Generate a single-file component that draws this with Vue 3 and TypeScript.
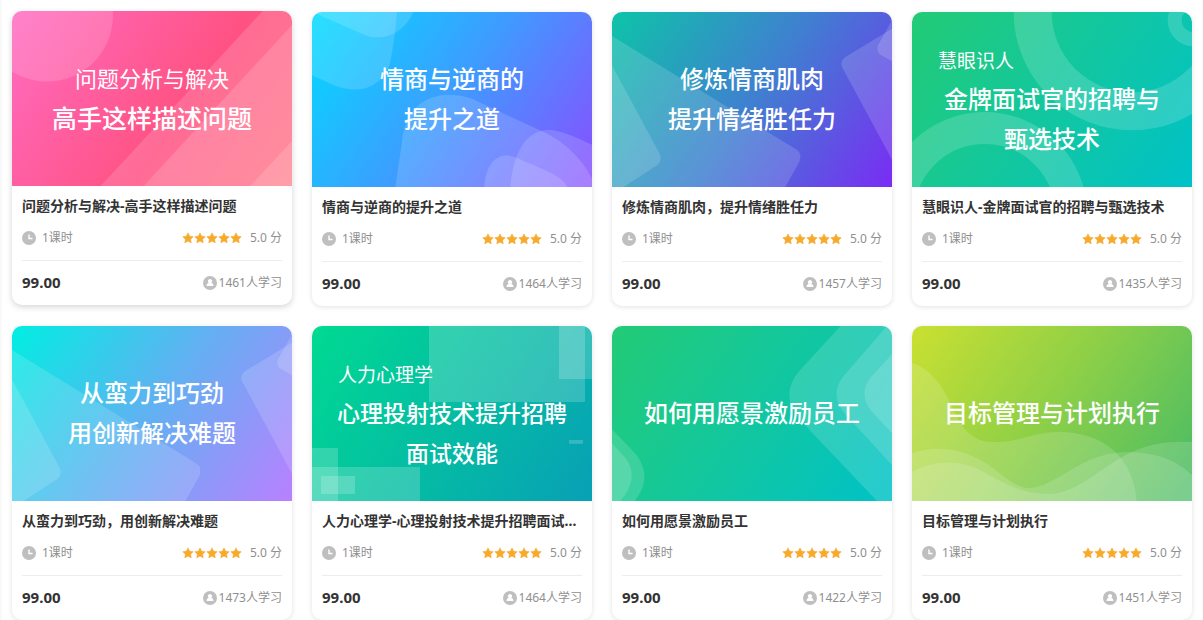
<script setup lang="ts">
interface CoverLine {
  text: string
  kind: 'main' | 'sub' | 'lead'
}

interface Cover {
  stops: string[]
  middle?: number
  opacity?: number
  shapes: string[]
  rings?: { x: number; y: number; r: number; width: number }[]
  size: 's' | 'm' | 'l'
  lines: CoverLine[]
}

interface Course {
  id: number
  title: string
  lessons: number
  score: string
  price: string
  learners: number
  active?: boolean
  cover: Cover
}

const tileShapes = [
  'M0 72L552 412Q572 424 562 450L520 525H0Z',
  'M0 160L143 425Q152 445 135 460L35 525H0Z',
  'M840 50L700 135Q683 146 690 165L840 443Z',
  'M840 25L798 100Q792 115 803 127L840 148Z',
]

const main = (text: string): CoverLine => ({ text, kind: 'main' })

const courses: Course[] = [
  {
    id: 1,
    title: '问题分析与解决-高手这样描述问题',
    lessons: 1,
    score: '5.0',
    price: '99.00',
    learners: 1461,
    active: true,
    cover: {
      stops: ['#ff6cc2', '#ff5283', '#ff6275'],
      middle: 0.6,
      shapes: [
        'M105 -184.500A198 198 0 1 1 104.900 -184.500Z',
        'M752 0L266 525H840V0Z',
        'M840 42L395 525H840Z',
        'M840 390L715 525H840Z',
      ],
      size: 'l',
      lines: [{ text: '问题分析与解决', kind: 'lead' }, main('高手这样描述问题')],
    },
  },
  {
    id: 2,
    title: '情商与逆商的提升之道',
    lessons: 1,
    score: '5.0',
    price: '99.00',
    learners: 1464,
    cover: {
      stops: ['#00dcff', '#3f9bff', '#8a4dff'],
      shapes: [
        'M0 0L150 65C190 85 265 85 304 0Z',
        'M0 190L70 222C150 250 215 220 235 150Q250 70 255 0H0Z',
        'M250 525L270 390C280 270 370 225 480 260L690 358C760 390 810 440 840 500V525Z',
        'M595 525C605 420 640 350 720 354C760 360 800 380 840 398V525Z',
        'M517 525C522 440 570 415 620 440L700 475C735 490 755 505 766 525Z',
      ],
      size: 'm',
      lines: [main('情商与逆商的'), main('提升之道')],
    },
  },
  {
    id: 3,
    title: '修炼情商肌肉，提升情绪胜任力',
    lessons: 1,
    score: '5.0',
    price: '99.00',
    learners: 1457,
    cover: {
      stops: ['#0dc4a8', '#3f80d0', '#7a2cf4'],
      shapes: tileShapes,
      size: 'm',
      lines: [main('修炼情商肌肉'), main('提升情绪胜任力')],
    },
  },
  {
    id: 4,
    title: '慧眼识人-金牌面试官的招聘与甄选技术',
    lessons: 1,
    score: '5.0',
    price: '99.00',
    learners: 1435,
    cover: {
      stops: ['#23cb75', '#12c79f', '#00c2c8'],
      shapes: [],
      rings: [
        { x: 660, y: 0, r: 298, width: 114 },
        { x: 845, y: 25, r: 57, width: 42 },
        { x: 218, y: 608, r: 260, width: 96 },
      ],
      size: 'm',
      lines: [
        { text: '慧眼识人', kind: 'sub' },
        main('金牌面试官的招聘与'),
        main('甄选技术'),
      ],
    },
  },
  {
    id: 5,
    title: '从蛮力到巧劲，用创新解决难题',
    lessons: 1,
    score: '5.0',
    price: '99.00',
    learners: 1473,
    cover: {
      stops: ['#00eee2', '#62b0f2', '#b980ff'],
      shapes: tileShapes,
      size: 'm',
      lines: [main('从蛮力到巧劲'), main('用创新解决难题')],
    },
  },
  {
    id: 6,
    title: '人力心理学-心理投射技术提升招聘面试效能',
    lessons: 1,
    score: '5.0',
    price: '99.00',
    learners: 1464,
    cover: {
      stops: ['#00da92', '#04bda3', '#08a0b6'],
      opacity: 0.19,
      shapes: [
        'M351 0H819V228H351Z',
        'M741 0H840V159H741Z',
        'M771 342H813V353H771Z',
        'M0 366H78V525H0Z',
        'M0 423H324V525H0Z',
        'M27 450H129V504H27Z',
      ],
      size: 's',
      lines: [
        { text: '人力心理学', kind: 'sub' },
        main('心理投射技术提升招聘'),
        main('面试效能'),
      ],
    },
  },
  {
    id: 7,
    title: '如何用愿景激励员工',
    lessons: 1,
    score: '5.0',
    price: '99.00',
    learners: 1422,
    cover: {
      stops: ['#23cb75', '#12c79f', '#00c2c8'],
      shapes: [
        'M686 0L562 135Q502 205 562 280L795 525H840V0Z',
        'M825 0L695 150Q650 205 700 265L840 418V0Z',
        'M840 85L775 155Q738 205 778 255L840 322Z',
        'M0 310L72 385Q125 455 68 525H0Z',
        'M0 352L40 395Q85 455 25 525H0Z',
      ],
      size: 'm',
      lines: [main('如何用愿景激励员工')],
    },
  },
  {
    id: 8,
    title: '目标管理与计划执行',
    lessons: 1,
    score: '5.0',
    price: '99.00',
    learners: 1451,
    cover: {
      stops: ['#cae031', '#8ccf48', '#46bb66'],
      shapes: [
        'M0 110C60 130 90 180 120 240C150 310 180 348 245 348C320 350 360 318 440 318C580 318 665 400 674 525H0Z',
        'M0 382C80 355 150 370 210 405C270 440 290 475 345 487C440 485 500 378 650 378C730 380 790 400 840 447V525H0Z',
        'M0 437C80 395 160 405 220 440C290 480 340 505 410 504C540 500 600 350 800 347L840 348V525H0Z',
      ],
      size: 'm',
      lines: [main('目标管理与计划执行')],
    },
  },
]
</script>

<template>
  <main class="page">
    <ul class="grid">
      <li v-for="course in courses" :key="course.id">
        <a class="card" :class="{ active: course.active }" :href="`#course-${course.id}`">
          <div class="cover">
            <svg class="art" viewBox="0 0 840 525" preserveAspectRatio="none" aria-hidden="true">
              <defs>
                <linearGradient
                  :id="`bg-${course.id}`"
                  gradientUnits="userSpaceOnUse"
                  x1="12"
                  y1="-17"
                  x2="828"
                  y2="542"
                >
                  <stop offset="0" :stop-color="course.cover.stops[0]" />
                  <stop
                    :offset="course.cover.middle ?? 0.5"
                    :stop-color="course.cover.stops[1]"
                  />
                  <stop offset="1" :stop-color="course.cover.stops[2]" />
                </linearGradient>
              </defs>
              <rect width="840" height="525" :fill="`url(#bg-${course.id})`" />
              <path
                v-for="(shape, i) in course.cover.shapes"
                :key="i"
                :d="shape"
                fill="#fff"
                :fill-opacity="course.cover.opacity ?? 0.15"
              />
              <circle
                v-for="(ring, i) in course.cover.rings ?? []"
                :key="`ring-${i}`"
                :cx="ring.x"
                :cy="ring.y"
                :r="ring.r"
                :stroke-width="ring.width"
                fill="none"
                stroke="#fff"
                stroke-opacity="0.16"
              />
            </svg>
            <div class="caption" :class="`size-${course.cover.size}`">
              <span v-for="line in course.cover.lines" :key="line.text" :class="line.kind">{{
                line.text
              }}</span>
            </div>
          </div>
          <div class="body">
            <h3 class="title">{{ course.title }}</h3>
            <div class="meta">
              <span class="lessons">
                <svg class="icon" viewBox="0 0 14 14" aria-hidden="true">
                  <circle cx="7" cy="7" r="7" fill="#bfbfbf" />
                  <path d="M7 3.500V7.500H10.500" fill="none" stroke="#fff" stroke-width="1.400" />
                </svg>
                {{ course.lessons }}课时
              </span>
              <span class="rating">
                <span class="stars" role="img" aria-label="5 / 5">
                  <svg v-for="n in 5" :key="n" class="star" viewBox="0 0 12 12">
                    <path
                      d="M6 .9L7.600 4.200L11.200 4.700L8.600 7.200L9.200 10.800L6 9.100L2.800 10.800L3.400 7.200L.8 4.700L4.400 4.200Z"
                      fill="#f7a92c"
                      stroke="#f7a92c"
                      stroke-width=".6"
                      stroke-linejoin="round"
                    />
                  </svg>
                </span>
                <span>{{ course.score }} 分</span>
              </span>
            </div>
            <div class="foot">
              <strong class="price">{{ course.price }}</strong>
              <span class="learners">
                <svg class="icon" viewBox="0 0 14 14" aria-hidden="true">
                  <circle cx="7" cy="7" r="7" fill="#bfbfbf" />
                  <path
                    d="M7 2.900A2.200 2.300 0 0 1 8.200 7.100C9.700 7.400 10.500 8.500 10.500 10H3.500C3.500 8.500 4.300 7.400 5.800 7.100A2.200 2.300 0 0 1 7 2.900Z"
                    fill="#fff"
                  />
                </svg>
                {{ course.learners }}人学习
              </span>
            </div>
          </div>
        </a>
      </li>
    </ul>
  </main>
</template>

<style>
body {
  margin: 0;
  background: #f9f9f9;
}
</style>

<style scoped>
.page {
  margin: 0 1px 0 2px;
  padding: 12px 10px 0;
  background: #fff;
  font-family: 'Noto Sans', 'Noto Sans CJK SC', sans-serif;
  color: #333;
}

.grid {
  display: grid;
  grid-template-columns: repeat(4, minmax(0, 1fr));
  gap: 20px;
  margin: 0;
  padding: 0;
  list-style: none;
}

.card {
  display: block;
  overflow: hidden;
  border-radius: 10px;
  background: #fff;
  box-shadow: 0 1px 5px rgba(0, 0, 0, 0.12);
  color: inherit;
  text-decoration: none;
}

.card.active,
.card:hover {
  transform: translateY(-1px);
  box-shadow: 0 2px 6px rgba(0, 0, 0, 0.17);
}

.cover {
  display: grid;
  aspect-ratio: 8 / 5;
  overflow: hidden;
}

.art,
.caption {
  grid-area: 1 / 1;
  width: 100%;
  height: 100%;
}

.caption {
  z-index: 1;
  display: flex;
  flex-direction: column;
  align-items: center;
  justify-content: center;
  box-sizing: border-box;
  padding-bottom: 4px;
  color: #fff;
  font-family: 'Noto Sans CJK SC', sans-serif;
  font-weight: 500;
  line-height: 40px;
  white-space: nowrap;
}

.size-s {
  font-size: 23px;
}

.size-m {
  font-size: 24px;
}

.size-l {
  font-size: 25px;
}

.lead {
  font-size: 22px;
  font-weight: 400;
}

.sub {
  align-self: flex-start;
  margin: 4px 0 0 26px;
  font-size: 19px;
  font-weight: 400;
  line-height: 36px;
}

.body {
  padding: 0 10px;
}

.title {
  margin: 0;
  overflow: hidden;
  font-size: 14px;
  font-weight: 700;
  line-height: 40px;
  text-overflow: ellipsis;
  white-space: nowrap;
}

.meta {
  display: flex;
  align-items: center;
  justify-content: space-between;
  padding-bottom: 10px;
  border-bottom: 1px solid #ededed;
  color: #8f8f8f;
  font-size: 12px;
  line-height: 24px;
}

.lessons {
  display: flex;
  align-items: center;
  gap: 6px;
}

.rating {
  display: flex;
  align-items: center;
  gap: 8px;
}

.stars {
  display: flex;
}

.star {
  width: 12px;
  height: 12px;
}

.icon {
  flex: none;
  width: 14px;
  height: 14px;
}

.foot {
  display: flex;
  align-items: center;
  justify-content: space-between;
  line-height: 44px;
}

.price {
  padding-bottom: 2px;
  font-size: 15px;
  line-height: 24px;
}

.learners {
  display: flex;
  align-items: center;
  gap: 2px;
  color: #8f8f8f;
  font-size: 12px;
}
</style>
